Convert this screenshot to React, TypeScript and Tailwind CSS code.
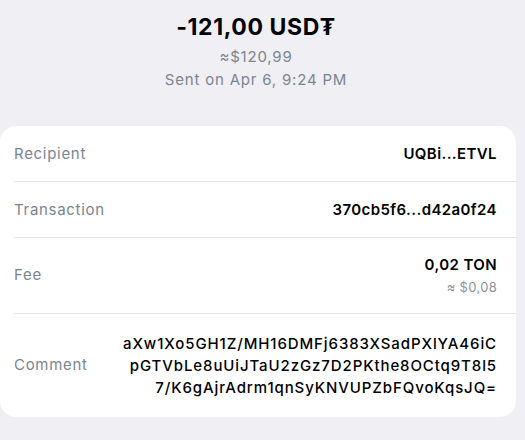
const ROWS = [
  { label: "Recipient", value: "UQBi...ETVL" },
  { label: "Transaction", value: "370cb5f6...d42a0f24" },
];

const COMMENT = [
  "aXw1Xo5GH1Z/MH16DMFj6383XSadPXlYA46iC",
  "pGTVbLe8uUiJTaU2zGz7D2PKthe8OCtq9T8l5",
  "7/K6gAjrAdrm1qnSyKNVUPZbFQvoKqsJQ=",
];

export default function App() {
  return (
    <div className="h-[440px] w-[525px] overflow-hidden bg-[#efeff4] font-['Inter',sans-serif]">
      <div className="flex w-[512px] flex-col items-center pt-[12px]">
        <div className="text-[23px] font-bold leading-[30px] tracking-[0.6px] text-black">-121,00 USD₮</div>
        <div className="mt-[5px] text-[15px] leading-[20px] tracking-[0.8px] text-[#7c8591]">≈$120,99</div>
        <div className="mt-[3px] text-[15px] leading-[20px] tracking-[0.8px] text-[#7c8591]">
          Sent on Apr 6, 9:24 PM
        </div>
      </div>

      <div className="mt-[36px] w-[516px] rounded-[16px] bg-white pl-[14px]">
        {ROWS.map((row) => (
          <div
            key={row.label}
            className="flex h-[56px] items-center justify-between border-b border-[#e8e8ec] pr-[19px] pt-[1px]"
          >
            <span className="text-[15px] tracking-[0.7px] text-[#7a8593]">{row.label}</span>
            <span className="text-[15px] font-semibold tracking-[0.4px] text-black">{row.value}</span>
          </div>
        ))}
        <div className="flex h-[76px] items-center justify-between border-b border-[#e8e8ec] pr-[19px]">
          <span className="text-[15px] tracking-[0.7px] text-[#7a8593]">Fee</span>
          <div className="flex flex-col items-end">
            <span className="text-[15px] font-semibold leading-[22px] tracking-[0.4px] text-black">0,02 TON</span>
            <span className="text-[13px] leading-[22px] tracking-[0.3px] text-[#8c939d]">≈ $0,08</span>
          </div>
        </div>
        <div className="flex h-[103px] items-center justify-between pr-[19px]">
          <span className="text-[15px] tracking-[0.7px] text-[#7a8593]">Comment</span>
          <div className="flex flex-col items-end text-[15px] font-medium leading-[22px] tracking-[0.9px] text-black">
            {COMMENT.map((line) => (
              <span key={line}>{line}</span>
            ))}
          </div>
        </div>
      </div>
    </div>
  );
}
